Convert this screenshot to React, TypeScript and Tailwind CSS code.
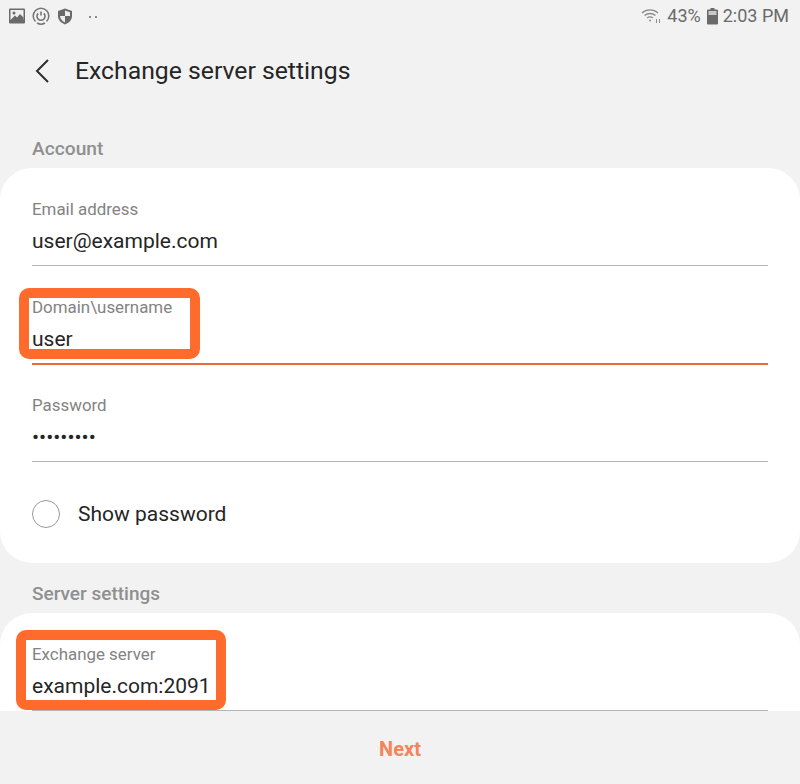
const FONT = "font-['Roboto','Liberation_Sans',sans-serif]";

function Field({ label, value, active }: { label: string; value: string; active?: boolean }) {
  return (
    <div className="h-[98px]">
      <div className="pt-[31px] text-[16.9px] leading-[20px] text-[#838383]">{label}</div>
      <div className="mt-[10px] text-[21px] leading-[24px] text-[#252525]">{value}</div>
      <div className={`mt-[12px] ${active ? 'h-[2px] bg-[#e8693a]' : 'h-[1px] bg-[#b4b4b4]'}`} />
    </div>
  );
}

function StatusLeft() {
  return (
    <div className="flex items-center pl-[9px] pt-[1px]">
      <svg width="16" height="16" viewBox="0 0 16 16">
        <rect x="0" y="0.5" width="16" height="15" rx="1" fill="#6a6a6a" />
        <rect x="1.5" y="2" width="13" height="10" fill="#efefef" />
        <circle cx="5" cy="5" r="1.5" fill="#6a6a6a" />
        <path d="M1.5 12 L6 7.5 L8 9.5 L11 6 L14.5 9.5 V12 Z" fill="#6a6a6a" />
      </svg>
      <svg className="ml-[7px]" width="18" height="18" viewBox="0 0 18 18" fill="none" stroke="#757575">
        <path d="M14.5 14.5 A7.8 7.8 0 1 0 3.5 14.5" strokeWidth="1.5" />
        <path d="M5 16 A7.8 7.8 0 0 0 13 16" strokeWidth="1.5" />
        <path d="M6.2 6.4 A4 4 0 1 0 11.8 6.4" strokeWidth="1.6" />
        <path d="M9 4.5 V8.5" strokeWidth="1.6" />
      </svg>
      <svg className="ml-[7px]" width="16" height="17" viewBox="0 0 16 17">
        <path d="M8 0.5 L15 3 V8 C15 12 12 15 8 16.5 C4 15 1 12 1 8 V3 Z" fill="#6a6a6a" />
        <path d="M8 2.5 L13 4.2 V8 H8 Z" fill="#efefef" />
        <path d="M8 8 H3 C3.4 11 5.4 13.4 8 14.5 Z" fill="#efefef" />
      </svg>
      <div className="flex gap-[4px] ml-[16px] mt-[1px]">
        <div className="w-[2px] h-[2px] rounded-full bg-[#6a6a6a]" />
        <div className="w-[2px] h-[2px] rounded-full bg-[#6a6a6a]" />
      </div>
    </div>
  );
}

function StatusRight() {
  return (
    <div className="flex items-center pr-[11px] pt-[1px] text-[18px] leading-[20px] text-[#6a6a6a]">
      <svg width="22" height="16" viewBox="0 0 22 16" fill="none" stroke="#8c8c8c" strokeWidth="1.3">
        <path d="M1 5 A12 12 0 0 1 17 5" />
        <path d="M3.5 7.5 A8.5 8.5 0 0 1 14.5 7.5" />
        <path d="M6 10 A5 5 0 0 1 12 10" />
        <circle cx="9" cy="12.5" r="1" fill="#8c8c8c" stroke="none" />
        <path d="M15.5 11 V15 M18.5 15 V11" strokeWidth="1" />
      </svg>
      <span className="ml-[4px]">43%</span>
      <svg className="ml-[6px]" width="11" height="17" viewBox="0 0 11 17">
        <rect x="3.5" y="0" width="4" height="2" fill="#6a6a6a" />
        <rect x="0" y="1.5" width="11" height="15" rx="1" fill="#6a6a6a" />
        <rect x="1.5" y="3" width="8" height="4" fill="#c8c8c8" />
      </svg>
      <span className="ml-[5px]">2:03 PM</span>
    </div>
  );
}

export default function App() {
  return (
    <div className={`${FONT} h-[784px] w-[800px] bg-[#f2f2f2] flex flex-col overflow-hidden relative`}>
      <div className="h-[31px] flex items-center justify-between">
        <StatusLeft />
        <StatusRight />
      </div>
      <div className="h-[80px] flex items-center">
        <svg className="ml-[35px]" width="14" height="24" viewBox="0 0 14 24" fill="none" stroke="#2e2e2e" strokeWidth="2">
          <path d="M13 1 L2 12 L13 23" />
        </svg>
        <div className="ml-[26px] text-[24.75px] text-[#252525] leading-[30px]">Exchange server settings</div>
      </div>
      <div className="pl-[32px] h-[57px] pt-[26px] text-[19.2px] leading-[24px] font-medium text-[#8f8f8f] box-border">Account</div>
      <div className="bg-white rounded-[32px] px-[32px] h-[395px] shrink-0">
        <Field label="Email address" value="user@example.com" />
        <Field label="Domain\username" value="user" active />
        <Field label="Password" value="•••••••••" />
        <div className="flex items-center h-[104px]">
          <div className="w-[28px] h-[28px] rounded-full border border-[#999999]" />
          <div className="ml-[18px] mt-[1px] text-[21px] text-[#252525]">Show password</div>
        </div>
      </div>
      <div className="pl-[32px] h-[50px] pt-[19px] text-[19px] leading-[24px] font-medium text-[#8f8f8f] box-border">Server settings</div>
      <div className="bg-white rounded-t-[32px] px-[32px] h-[98px] shrink-0">
        <Field label="Exchange server" value="example.com:2091" />
      </div>
      <div className="flex-1 flex items-center justify-center text-[20px] font-bold text-[#f5845a] pt-[2px]">Next</div>
      <div className="absolute left-[19px] top-[288px] w-[181px] h-[71px] border-[10px] border-[#ff6b2d] rounded-[10px]" />
      <div className="absolute left-[16px] top-[630px] w-[210px] h-[80px] border-[10px] border-[#ff6b2d] rounded-[10px]" />
    </div>
  );
}
